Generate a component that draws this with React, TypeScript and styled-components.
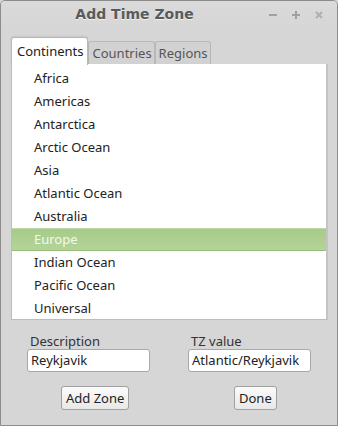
import React from "react";
import styled, { createGlobalStyle } from "styled-components";

const Global = createGlobalStyle`
  html, body { margin: 0; padding: 0; background: #d6d6d6; }
  body { font-family: "Noto Sans", "DejaVu Sans", sans-serif; font-size: 12px; }
`;

const Window = styled.div`
  box-sizing: border-box;
  width: 338px;
  height: 426px;
  background: #d6d6d6;
  border: 1px solid #8c8c8c;
  border-radius: 5px 5px 0 0;
  display: flex;
  flex-direction: column;
  overflow: hidden;
`;

const TitleBar = styled.div`
  position: relative;
  height: 28px;
  display: flex;
  align-items: center;
  justify-content: center;
  background: linear-gradient(#dadada, #d6d6d6);
`;

const Title = styled.div`
  font-family: "DejaVu Sans", sans-serif;
  font-weight: bold;
  font-size: 14px;
  color: #5a5a5a;
  text-shadow: 0 1px 0 #f0f0f0;
  margin-left: -69px;
  margin-top: -3px;
`;

const Controls = styled.div`
  position: absolute;
  right: 13px;
  top: 9px;
  display: flex;
  gap: 13px;
  align-items: center;
`;

const Ctl = styled.span`
  width: 10px;
  height: 10px;
  display: flex;
  align-items: center;
  justify-content: center;
`;

const Body = styled.div`
  padding: 8px 10px 0 10px;
  display: flex;
  flex-direction: column;
`;

const Tabs = styled.div`
  display: flex;
  align-items: flex-end;
  height: 27px;
`;

const Tab = styled.div<{ $active?: boolean }>`
  box-sizing: border-box;
  height: ${(p) => (p.$active ? "28px" : "23px")};
  padding: ${(p) => (p.$active ? "4px 4px 0 5px" : "2px 2px 0 3px")};
  background: ${(p) => (p.$active ? "#ffffff" : "#d2d2d2")};
  border: 1px solid #b8b8b8;
  border-bottom: none;
  border-radius: 3px 3px 0 0;
  color: ${(p) => (p.$active ? "#222" : "#555")};
  font-size: 13px;
  margin-bottom: ${(p) => (p.$active ? "-1px" : "0")};
  position: relative;
  z-index: ${(p) => (p.$active ? 2 : 1)};
  box-shadow: ${(p) => (p.$active ? "0 -1px 2px rgba(0,0,0,0.08)" : "none")};
`;

const Panel = styled.div`
  box-sizing: border-box;
  width: 317px;
  height: 256px;
  background: #ffffff;
  border: 1px solid #bcbcbc;
  border-top: none;
  border-right: 2px solid #c4c4c4;
  padding-top: 3px;
  display: flex;
  flex-direction: column;
`;

const Row = styled.div<{ $selected?: boolean }>`
  height: 23px;
  line-height: 23px;
  padding-left: 22px;
  font-size: 13px;
  color: ${(p) => (p.$selected ? "#f4f8ee" : "#222")};
  background: ${(p) =>
    p.$selected ? "linear-gradient(#a6ca88, #b4d59b)" : "transparent"};
  box-shadow: ${(p) =>
    p.$selected ? "inset 0 -1px 0 #98bd7a, inset 0 1px 0 #bcd9a6" : "none"};
`;

const Form = styled.div`
  display: grid;
  grid-template-columns: 161px 1fr;
  padding: 13px 0 0 16px;
`;

const Field = styled.div`
  display: flex;
  flex-direction: column;
`;

const Label = styled.div`
  font-size: 13px;
  color: #333;
  padding-left: 3px;
  height: 16px;
  line-height: 16px;
`;

const Input = styled.div<{ $w: number }>`
  box-sizing: border-box;
  width: ${(p) => p.$w}px;
  height: 23px;
  background: #fff;
  border: 1px solid #a8a8a8;
  border-radius: 3px;
  font-size: 13px;
  color: #222;
  line-height: 21px;
  padding-left: 3px;
`;

const BtnCell = styled.div<{ $ml: number }>`
  padding-top: 14px;
  padding-left: ${(p) => p.$ml}px;
`;

const Button = styled.div`
  display: inline-block;
  box-sizing: border-box;
  height: 24px;
  line-height: 22px;
  padding: 0 4px;
  background: linear-gradient(#fbfbfb, #e8e8e8);
  border: 1px solid #a0a0a0;
  border-radius: 3px;
  font-size: 13px;
  color: #222;
`;

const items = [
  "Africa",
  "Americas",
  "Antarctica",
  "Arctic Ocean",
  "Asia",
  "Atlantic Ocean",
  "Australia",
  "Europe",
  "Indian Ocean",
  "Pacific Ocean",
  "Universal",
];

export default function App() {
  return (
    <>
      <Global />
      <Window>
        <TitleBar>
          <Title>Add Time Zone</Title>
          <Controls>
            <Ctl>
              <svg width="10" height="10" viewBox="0 0 10 10">
                <rect x="1" y="4" width="8" height="2" fill="#a0a0a0" />
              </svg>
            </Ctl>
            <Ctl>
              <svg width="10" height="10" viewBox="0 0 10 10">
                <rect x="1" y="4" width="8" height="2" fill="#a0a0a0" />
                <rect x="4" y="1" width="2" height="8" fill="#a0a0a0" />
              </svg>
            </Ctl>
            <Ctl>
              <svg width="10" height="10" viewBox="0 0 10 10">
                <path d="M2 2 L8 8 M8 2 L2 8" stroke="#b0b0b0" strokeWidth="2" />
              </svg>
            </Ctl>
          </Controls>
        </TitleBar>
        <Body>
          <Tabs>
            <Tab $active>Continents</Tab>
            <Tab>Countries</Tab>
            <Tab>Regions</Tab>
          </Tabs>
          <Panel>
            {items.map((it) => (
              <Row key={it} $selected={it === "Europe"}>
                {it}
              </Row>
            ))}
          </Panel>
          <Form>
            <Field>
              <Label>Description</Label>
              <Input $w={123}>Reykjavik</Input>
            </Field>
            <Field>
              <Label>TZ value</Label>
              <Input $w={123}>Atlantic/Reykjavik</Input>
            </Field>
            <BtnCell $ml={34}>
              <Button>Add Zone</Button>
            </BtnCell>
            <BtnCell $ml={46}>
              <Button>Done</Button>
            </BtnCell>
          </Form>
        </Body>
      </Window>
    </>
  );
}
